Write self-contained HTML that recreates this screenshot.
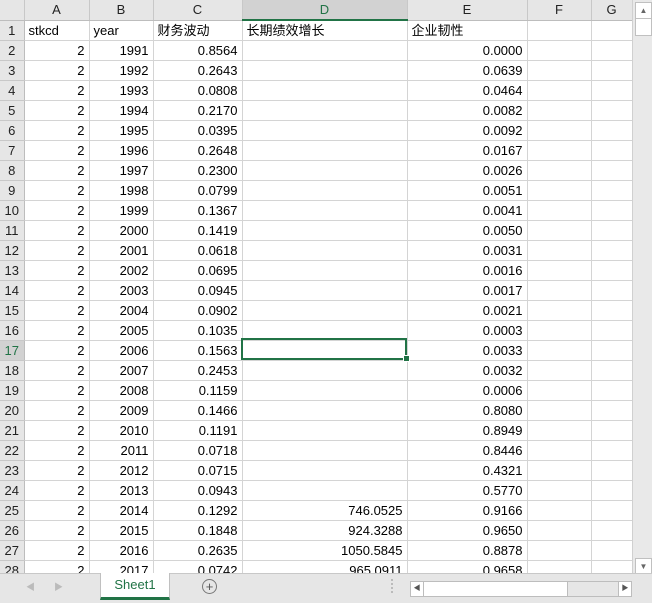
<!DOCTYPE html>
<html><head><meta charset="utf-8"><style>
body{margin:0;width:652px;height:602px;overflow:hidden;background:#fff;font-family:"Liberation Sans","Noto Sans CJK SC",sans-serif;font-size:13px;color:#000;position:relative}
table{position:absolute;left:0;top:0;border-collapse:collapse;table-layout:fixed}
td{height:19px;padding:0 4px;border-right:1px solid #d4d4d4;border-bottom:1px solid #d4d4d4;white-space:nowrap;overflow:hidden;text-align:right;line-height:19px}
tr.h td{background:#e6e6e6;text-align:center;border-right:1px solid #c8c8c8;border-bottom:1px solid #bdbdbd;color:#222}
td.r{background:#e6e6e6;text-align:center;padding:0;border-right:1px solid #bdbdbd;border-bottom:1px solid #c8c8c8;color:#222}
td.l{text-align:left}
.sel{position:absolute;left:241px;top:338px;width:162px;height:18px;border:2px solid #217346}
.hd{position:absolute;left:403px;top:355px;width:5px;height:5px;background:#217346;border:1px solid #fff}
.vs{position:absolute;left:632px;top:0;width:20px;height:582px;background:#e9e9e9;border-left:1px solid #d0d0d0}
.bar{position:absolute;left:0;top:573px;width:652px;height:29px;background:#e6e6e6;border-top:1px solid #c8c8c8}
</style></head><body>
<table>
<colgroup><col style="width:24px"><col style="width:65px"><col style="width:64px"><col style="width:89px"><col style="width:165px"><col style="width:120px"><col style="width:64px"><col style="width:41px"></colgroup>
<tr class="h"><td></td><td>A</td><td>B</td><td>C</td><td style="background:#d2d2d2;color:#217346;border-bottom:2px solid #217346">D</td><td>E</td><td>F</td><td>G</td></tr>
<tr><td class="r">1</td><td class="l">stkcd</td><td class="l">year</td><td class="l">财务波动</td><td class="l">长期绩效增长</td><td class="l">企业韧性</td><td></td><td></td></tr>
<tr><td class="r">2</td><td>2</td><td>1991</td><td>0.8564</td><td></td><td>0.0000</td><td></td><td></td></tr>
<tr><td class="r">3</td><td>2</td><td>1992</td><td>0.2643</td><td></td><td>0.0639</td><td></td><td></td></tr>
<tr><td class="r">4</td><td>2</td><td>1993</td><td>0.0808</td><td></td><td>0.0464</td><td></td><td></td></tr>
<tr><td class="r">5</td><td>2</td><td>1994</td><td>0.2170</td><td></td><td>0.0082</td><td></td><td></td></tr>
<tr><td class="r">6</td><td>2</td><td>1995</td><td>0.0395</td><td></td><td>0.0092</td><td></td><td></td></tr>
<tr><td class="r">7</td><td>2</td><td>1996</td><td>0.2648</td><td></td><td>0.0167</td><td></td><td></td></tr>
<tr><td class="r">8</td><td>2</td><td>1997</td><td>0.2300</td><td></td><td>0.0026</td><td></td><td></td></tr>
<tr><td class="r">9</td><td>2</td><td>1998</td><td>0.0799</td><td></td><td>0.0051</td><td></td><td></td></tr>
<tr><td class="r">10</td><td>2</td><td>1999</td><td>0.1367</td><td></td><td>0.0041</td><td></td><td></td></tr>
<tr><td class="r">11</td><td>2</td><td>2000</td><td>0.1419</td><td></td><td>0.0050</td><td></td><td></td></tr>
<tr><td class="r">12</td><td>2</td><td>2001</td><td>0.0618</td><td></td><td>0.0031</td><td></td><td></td></tr>
<tr><td class="r">13</td><td>2</td><td>2002</td><td>0.0695</td><td></td><td>0.0016</td><td></td><td></td></tr>
<tr><td class="r">14</td><td>2</td><td>2003</td><td>0.0945</td><td></td><td>0.0017</td><td></td><td></td></tr>
<tr><td class="r">15</td><td>2</td><td>2004</td><td>0.0902</td><td></td><td>0.0021</td><td></td><td></td></tr>
<tr><td class="r">16</td><td>2</td><td>2005</td><td>0.1035</td><td></td><td>0.0003</td><td></td><td></td></tr>
<tr><td class="r" style="background:#d2d2d2;color:#217346">17</td><td>2</td><td>2006</td><td>0.1563</td><td></td><td>0.0033</td><td></td><td></td></tr>
<tr><td class="r">18</td><td>2</td><td>2007</td><td>0.2453</td><td></td><td>0.0032</td><td></td><td></td></tr>
<tr><td class="r">19</td><td>2</td><td>2008</td><td>0.1159</td><td></td><td>0.0006</td><td></td><td></td></tr>
<tr><td class="r">20</td><td>2</td><td>2009</td><td>0.1466</td><td></td><td>0.8080</td><td></td><td></td></tr>
<tr><td class="r">21</td><td>2</td><td>2010</td><td>0.1191</td><td></td><td>0.8949</td><td></td><td></td></tr>
<tr><td class="r">22</td><td>2</td><td>2011</td><td>0.0718</td><td></td><td>0.8446</td><td></td><td></td></tr>
<tr><td class="r">23</td><td>2</td><td>2012</td><td>0.0715</td><td></td><td>0.4321</td><td></td><td></td></tr>
<tr><td class="r">24</td><td>2</td><td>2013</td><td>0.0943</td><td></td><td>0.5770</td><td></td><td></td></tr>
<tr><td class="r">25</td><td>2</td><td>2014</td><td>0.1292</td><td>746.0525</td><td>0.9166</td><td></td><td></td></tr>
<tr><td class="r">26</td><td>2</td><td>2015</td><td>0.1848</td><td>924.3288</td><td>0.9650</td><td></td><td></td></tr>
<tr><td class="r">27</td><td>2</td><td>2016</td><td>0.2635</td><td>1050.5845</td><td>0.8878</td><td></td><td></td></tr>
<tr><td class="r">28</td><td>2</td><td>2017</td><td>0.0742</td><td>965.0911</td><td>0.9658</td><td></td><td></td></tr>
</table>
<div class="sel"></div><div class="hd"></div>
<div class="vs">
<div style="position:absolute;left:2px;top:2px;width:15px;height:15px;background:#fff;border:1px solid #c0c0c0;font-size:8px;text-align:center;line-height:15px;color:#666">▲</div>
<div style="position:absolute;left:2px;top:18px;width:15px;height:16px;background:#fff;border:1px solid #c0c0c0"></div>
<div style="position:absolute;left:2px;top:558px;width:15px;height:15px;background:#fff;border:1px solid #c0c0c0;font-size:8px;text-align:center;line-height:15px;color:#666">▼</div>
</div>
<div class="bar">
<div style="position:absolute;left:26px;top:6px;font-size:9px;color:#bbb">◀</div>
<div style="position:absolute;left:54px;top:6px;font-size:9px;color:#bbb">▶</div>
<div style="position:absolute;left:100px;top:-1px;width:68px;height:24px;background:#fff;border-left:1px solid #c0c0c0;border-right:1px solid #c0c0c0;border-bottom:3px solid #217346;color:#217346;text-align:center;line-height:24px;font-size:13px">Sheet1</div>
<div style="position:absolute;left:202px;top:5px;width:13px;height:13px;border:1px solid #777;border-radius:50%;text-align:center;line-height:13px;font-size:13px;color:#555">+</div>
<div style="position:absolute;left:391px;top:5px;width:2px;height:14px;border-left:2px dotted #bbb"></div>
<div style="position:absolute;left:410px;top:7px;width:220px;height:14px;background:#e6e6e6;border:1px solid #bdbdbd">
<div style="position:absolute;left:0;top:0;width:12px;height:14px;background:#fff;border-right:1px solid #bdbdbd;font-size:7px;line-height:14px;text-align:center;color:#555">◀</div>
<div style="position:absolute;left:13px;top:0;width:143px;height:14px;background:#fff;border-right:1px solid #bdbdbd"></div>
<div style="position:absolute;right:0;top:0;width:12px;height:14px;background:#fff;border-left:1px solid #bdbdbd;font-size:7px;line-height:14px;text-align:center;color:#555">▶</div>
</div>
</div>
</body></html>
